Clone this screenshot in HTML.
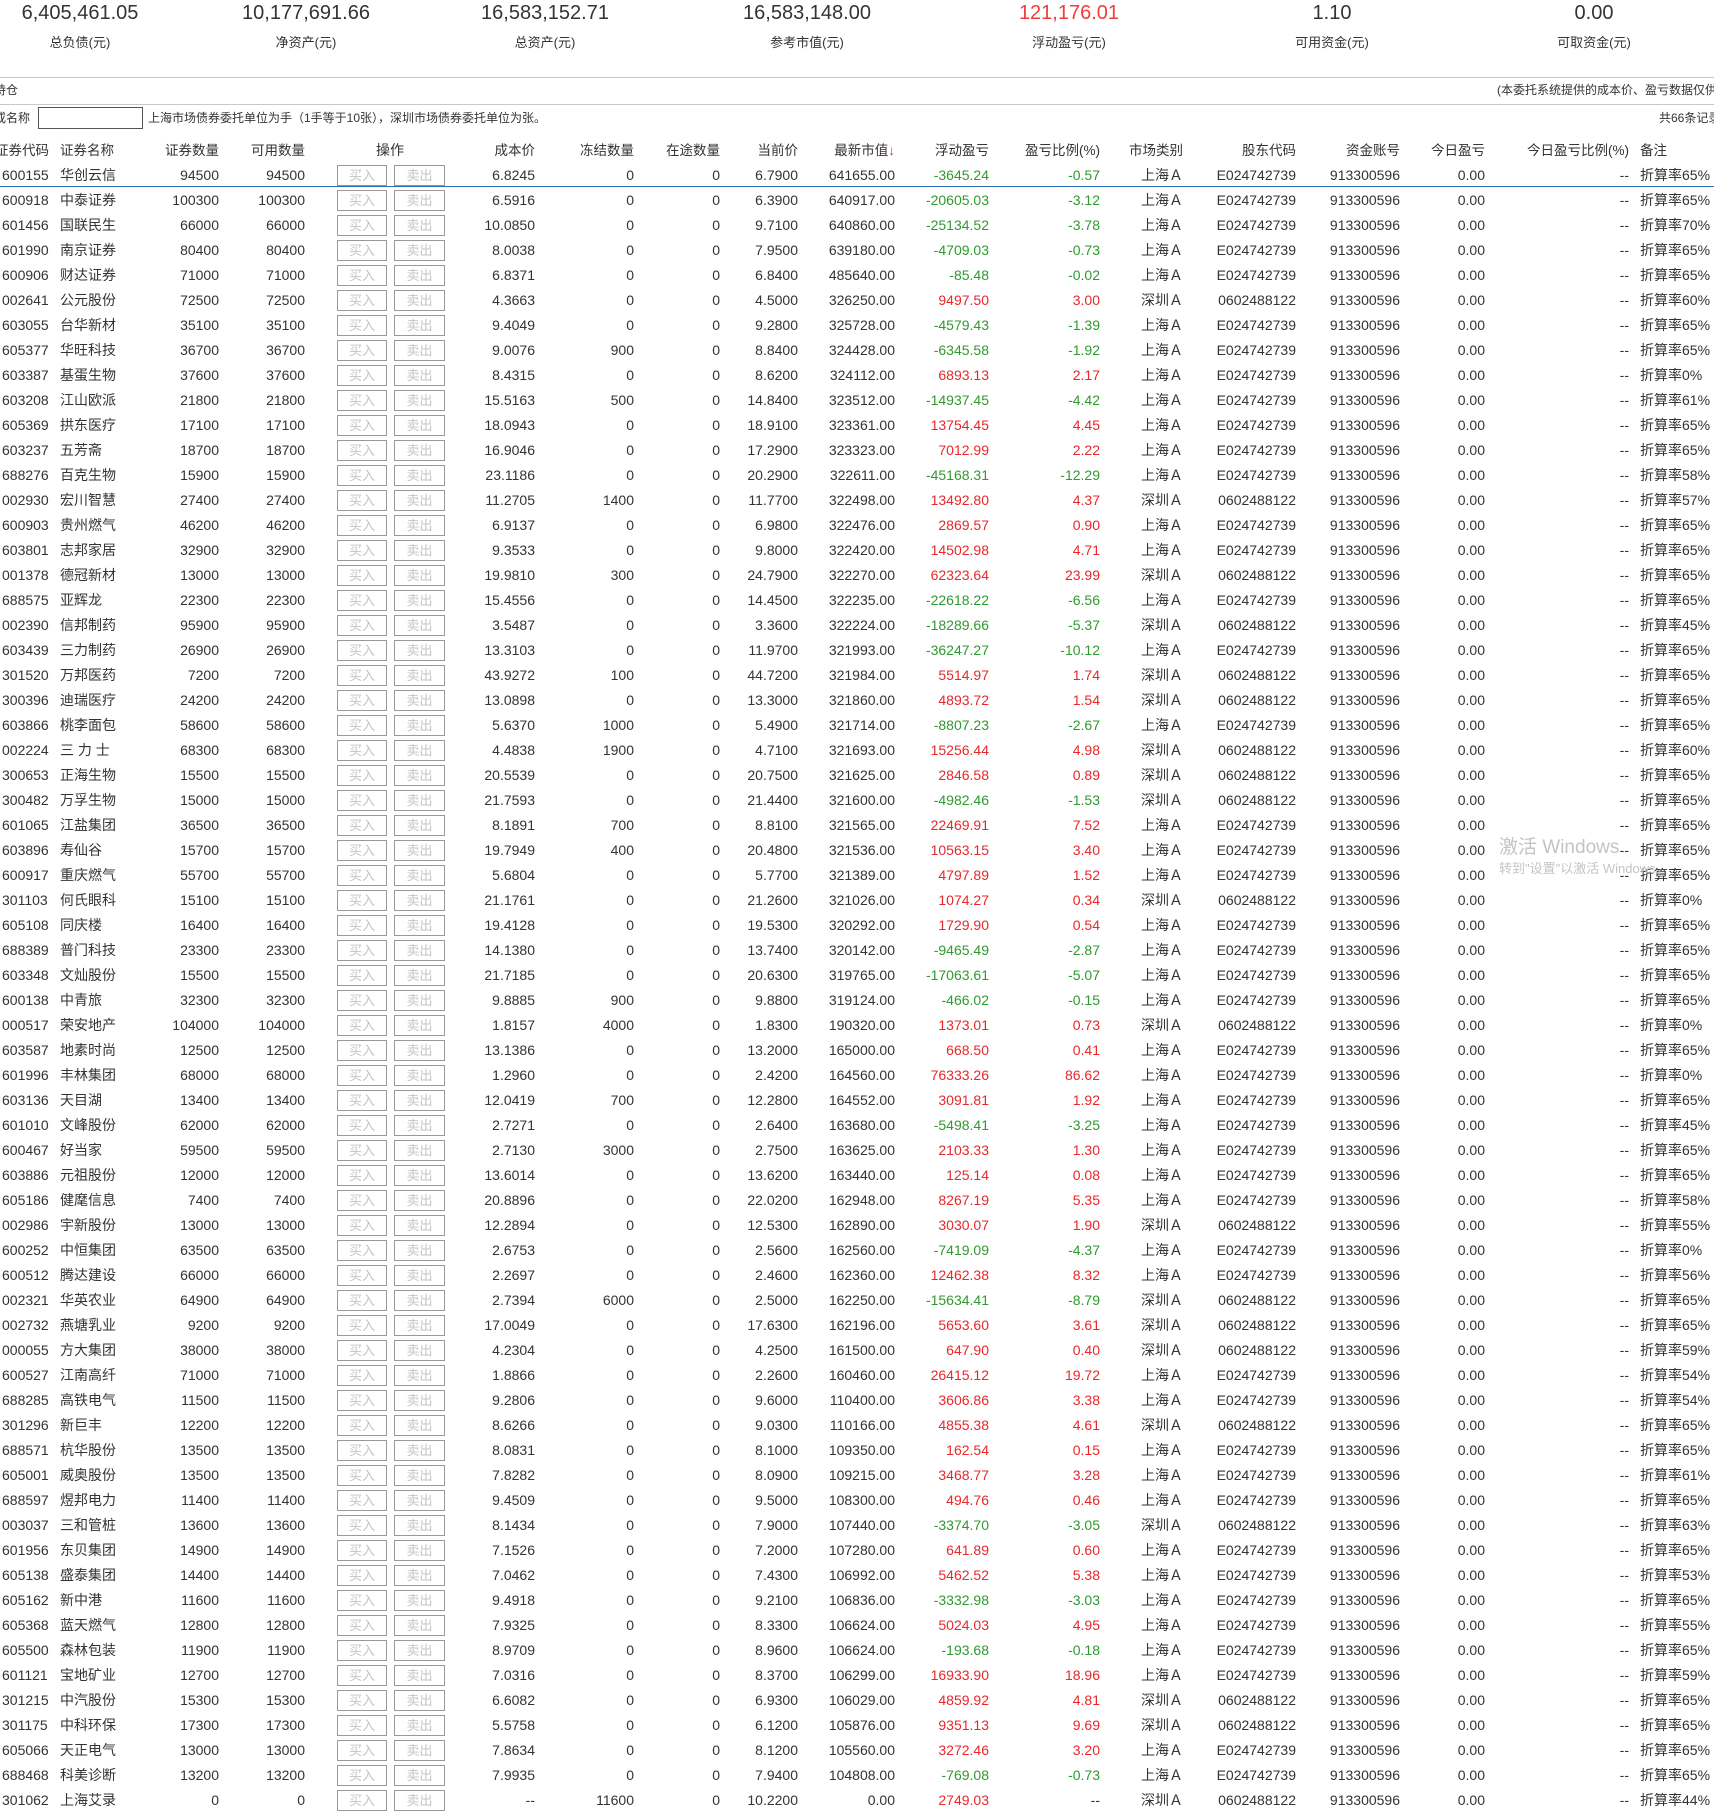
<!DOCTYPE html>
<html><head><meta charset="utf-8">
<style>
*{margin:0;padding:0;box-sizing:border-box}
body{width:1714px;height:1811px;overflow:hidden;background:#fff;font-family:"Liberation Sans","Noto Sans CJK SC",sans-serif;color:#333;font-size:14px;position:relative}
.sum{position:absolute;top:0;width:240px;text-align:center}
.sum .v{font-size:20px;line-height:26px;margin-top:0}
.sum .l{font-size:13px;line-height:20px;margin-top:7px}
.hl{position:absolute;left:0;width:1714px;height:1px;background:#c8c8c8}
.t{position:absolute;white-space:nowrap;font-size:12px;line-height:16px}
.inp{position:absolute;left:38px;top:107px;width:105px;height:22px;border:1px solid #555;background:#fff}
.tb{position:absolute;left:0;top:1px;width:1714px;height:1811px}
.r{position:absolute;left:0;width:1714px;height:25px;line-height:25px;font-size:14px}
.r>*{position:absolute;white-space:nowrap;font-style:normal;font-weight:normal}
.r>:nth-child(1){left:2px}
.r>:nth-child(2){left:60px}
.r>:nth-child(3){right:1495px}
.r>:nth-child(4){right:1409px}
.r>:nth-child(5),.r>:nth-child(6){top:2px;height:21px;width:50px;border:1px solid #999;line-height:19px;text-align:center;color:#c4c4c4;font-size:13px}
.r>:nth-child(5){left:337px}
.r>:nth-child(6){left:394px;width:51px}
.r>:nth-child(7){right:1179px}
.r>:nth-child(8){right:1080px}
.r>:nth-child(9){right:994px}
.r>:nth-child(10){right:916px}
.r>:nth-child(11){right:819px}
.r>:nth-child(12){right:725px}
.r>:nth-child(13){right:614px}
.r>:nth-child(14){right:531px}
.r>:nth-child(15){right:418px}
.r>:nth-child(16){right:314px}
.r>:nth-child(17){right:229px}
.r>:nth-child(18){right:85px}
.r>:nth-child(19){left:1640px}
.g>:nth-child(12),.g>:nth-child(13){color:#2f9a2f}
.d>:nth-child(12),.d>:nth-child(13){color:#e8282b}
.h>:nth-child(5){left:376px;border:none;color:#333;font-size:14px;top:0;line-height:25px;width:auto}
.h>:nth-child(6){display:none}
.blue{position:absolute;left:0;top:186px;width:1714px;height:1px;background:#2a6cb0}
.wm{position:absolute;left:1499px;color:#bbb;white-space:nowrap}
</style></head><body>
<div class="sum" style="left:-40px"><div class="v">6,405,461.05</div><div class="l">总负债(元)</div></div>
<div class="sum" style="left:186px"><div class="v">10,177,691.66</div><div class="l">净资产(元)</div></div>
<div class="sum" style="left:425px"><div class="v">16,583,152.71</div><div class="l">总资产(元)</div></div>
<div class="sum" style="left:687px"><div class="v">16,583,148.00</div><div class="l">参考市值(元)</div></div>
<div class="sum" style="left:949px"><div class="v" style="color:#f03c3c">121,176.01</div><div class="l">浮动盈亏(元)</div></div>
<div class="sum" style="left:1212px"><div class="v">1.10</div><div class="l">可用资金(元)</div></div>
<div class="sum" style="left:1474px"><div class="v">0.00</div><div class="l">可取资金(元)</div></div>
<div class="hl" style="top:77px"></div>
<div class="t" style="left:-6px;top:82px">持仓</div>
<div class="t" style="left:1497px;top:82px">(本委托系统提供的成本价、盈亏数据仅供参考)</div>
<div class="hl" style="top:104px"></div>
<div class="t" style="left:-6px;top:110px">或名称</div>
<div class="inp"></div>
<div class="t" style="left:148px;top:110px">上海市场债券委托单位为手（1手等于10张），深圳市场债券委托单位为张。</div>
<div class="t" style="left:1659px;top:110px">共66条记录</div>
<div class="blue"></div>
<div class="tb">
<div class="r h" style="top:137px;font-size:13.5px"><i style="left:-5px">证券代码</i><i>证券名称</i><i>证券数量</i><i>可用数量</i><i>操作</i><i></i><i>成本价</i><i>冻结数量</i><i>在途数量</i><i>当前价</i><i>最新市值<span style="color:#e8282b">↓</span></i><i>浮动盈亏</i><i>盈亏比例(%)</i><i>市场类别</i><i>股东代码</i><i>资金账号</i><i>今日盈亏</i><i>今日盈亏比例(%)</i><i>备注</i></div>
<div class="r g" style="top:162px"><i>600155</i><i>华创云信</i><i>94500</i><i>94500</i><b>买入</b><b>卖出</b><i>6.8245</i><i>0</i><i>0</i><i>6.7900</i><i>641655.00</i><i>-3645.24</i><i>-0.57</i><i>上海Ａ</i><i>E024742739</i><i>913300596</i><i>0.00</i><i>--</i><i>折算率65%</i></div>
<div class="r g" style="top:187px"><i>600918</i><i>中泰证券</i><i>100300</i><i>100300</i><b>买入</b><b>卖出</b><i>6.5916</i><i>0</i><i>0</i><i>6.3900</i><i>640917.00</i><i>-20605.03</i><i>-3.12</i><i>上海Ａ</i><i>E024742739</i><i>913300596</i><i>0.00</i><i>--</i><i>折算率65%</i></div>
<div class="r g" style="top:212px"><i>601456</i><i>国联民生</i><i>66000</i><i>66000</i><b>买入</b><b>卖出</b><i>10.0850</i><i>0</i><i>0</i><i>9.7100</i><i>640860.00</i><i>-25134.52</i><i>-3.78</i><i>上海Ａ</i><i>E024742739</i><i>913300596</i><i>0.00</i><i>--</i><i>折算率70%</i></div>
<div class="r g" style="top:237px"><i>601990</i><i>南京证券</i><i>80400</i><i>80400</i><b>买入</b><b>卖出</b><i>8.0038</i><i>0</i><i>0</i><i>7.9500</i><i>639180.00</i><i>-4709.03</i><i>-0.73</i><i>上海Ａ</i><i>E024742739</i><i>913300596</i><i>0.00</i><i>--</i><i>折算率65%</i></div>
<div class="r g" style="top:262px"><i>600906</i><i>财达证券</i><i>71000</i><i>71000</i><b>买入</b><b>卖出</b><i>6.8371</i><i>0</i><i>0</i><i>6.8400</i><i>485640.00</i><i>-85.48</i><i>-0.02</i><i>上海Ａ</i><i>E024742739</i><i>913300596</i><i>0.00</i><i>--</i><i>折算率65%</i></div>
<div class="r d" style="top:287px"><i>002641</i><i>公元股份</i><i>72500</i><i>72500</i><b>买入</b><b>卖出</b><i>4.3663</i><i>0</i><i>0</i><i>4.5000</i><i>326250.00</i><i>9497.50</i><i>3.00</i><i>深圳Ａ</i><i>0602488122</i><i>913300596</i><i>0.00</i><i>--</i><i>折算率60%</i></div>
<div class="r g" style="top:312px"><i>603055</i><i>台华新材</i><i>35100</i><i>35100</i><b>买入</b><b>卖出</b><i>9.4049</i><i>0</i><i>0</i><i>9.2800</i><i>325728.00</i><i>-4579.43</i><i>-1.39</i><i>上海Ａ</i><i>E024742739</i><i>913300596</i><i>0.00</i><i>--</i><i>折算率65%</i></div>
<div class="r g" style="top:337px"><i>605377</i><i>华旺科技</i><i>36700</i><i>36700</i><b>买入</b><b>卖出</b><i>9.0076</i><i>900</i><i>0</i><i>8.8400</i><i>324428.00</i><i>-6345.58</i><i>-1.92</i><i>上海Ａ</i><i>E024742739</i><i>913300596</i><i>0.00</i><i>--</i><i>折算率65%</i></div>
<div class="r d" style="top:362px"><i>603387</i><i>基蛋生物</i><i>37600</i><i>37600</i><b>买入</b><b>卖出</b><i>8.4315</i><i>0</i><i>0</i><i>8.6200</i><i>324112.00</i><i>6893.13</i><i>2.17</i><i>上海Ａ</i><i>E024742739</i><i>913300596</i><i>0.00</i><i>--</i><i>折算率0%</i></div>
<div class="r g" style="top:387px"><i>603208</i><i>江山欧派</i><i>21800</i><i>21800</i><b>买入</b><b>卖出</b><i>15.5163</i><i>500</i><i>0</i><i>14.8400</i><i>323512.00</i><i>-14937.45</i><i>-4.42</i><i>上海Ａ</i><i>E024742739</i><i>913300596</i><i>0.00</i><i>--</i><i>折算率61%</i></div>
<div class="r d" style="top:412px"><i>605369</i><i>拱东医疗</i><i>17100</i><i>17100</i><b>买入</b><b>卖出</b><i>18.0943</i><i>0</i><i>0</i><i>18.9100</i><i>323361.00</i><i>13754.45</i><i>4.45</i><i>上海Ａ</i><i>E024742739</i><i>913300596</i><i>0.00</i><i>--</i><i>折算率65%</i></div>
<div class="r d" style="top:437px"><i>603237</i><i>五芳斋</i><i>18700</i><i>18700</i><b>买入</b><b>卖出</b><i>16.9046</i><i>0</i><i>0</i><i>17.2900</i><i>323323.00</i><i>7012.99</i><i>2.22</i><i>上海Ａ</i><i>E024742739</i><i>913300596</i><i>0.00</i><i>--</i><i>折算率65%</i></div>
<div class="r g" style="top:462px"><i>688276</i><i>百克生物</i><i>15900</i><i>15900</i><b>买入</b><b>卖出</b><i>23.1186</i><i>0</i><i>0</i><i>20.2900</i><i>322611.00</i><i>-45168.31</i><i>-12.29</i><i>上海Ａ</i><i>E024742739</i><i>913300596</i><i>0.00</i><i>--</i><i>折算率58%</i></div>
<div class="r d" style="top:487px"><i>002930</i><i>宏川智慧</i><i>27400</i><i>27400</i><b>买入</b><b>卖出</b><i>11.2705</i><i>1400</i><i>0</i><i>11.7700</i><i>322498.00</i><i>13492.80</i><i>4.37</i><i>深圳Ａ</i><i>0602488122</i><i>913300596</i><i>0.00</i><i>--</i><i>折算率57%</i></div>
<div class="r d" style="top:512px"><i>600903</i><i>贵州燃气</i><i>46200</i><i>46200</i><b>买入</b><b>卖出</b><i>6.9137</i><i>0</i><i>0</i><i>6.9800</i><i>322476.00</i><i>2869.57</i><i>0.90</i><i>上海Ａ</i><i>E024742739</i><i>913300596</i><i>0.00</i><i>--</i><i>折算率65%</i></div>
<div class="r d" style="top:537px"><i>603801</i><i>志邦家居</i><i>32900</i><i>32900</i><b>买入</b><b>卖出</b><i>9.3533</i><i>0</i><i>0</i><i>9.8000</i><i>322420.00</i><i>14502.98</i><i>4.71</i><i>上海Ａ</i><i>E024742739</i><i>913300596</i><i>0.00</i><i>--</i><i>折算率65%</i></div>
<div class="r d" style="top:562px"><i>001378</i><i>德冠新材</i><i>13000</i><i>13000</i><b>买入</b><b>卖出</b><i>19.9810</i><i>300</i><i>0</i><i>24.7900</i><i>322270.00</i><i>62323.64</i><i>23.99</i><i>深圳Ａ</i><i>0602488122</i><i>913300596</i><i>0.00</i><i>--</i><i>折算率65%</i></div>
<div class="r g" style="top:587px"><i>688575</i><i>亚辉龙</i><i>22300</i><i>22300</i><b>买入</b><b>卖出</b><i>15.4556</i><i>0</i><i>0</i><i>14.4500</i><i>322235.00</i><i>-22618.22</i><i>-6.56</i><i>上海Ａ</i><i>E024742739</i><i>913300596</i><i>0.00</i><i>--</i><i>折算率65%</i></div>
<div class="r g" style="top:612px"><i>002390</i><i>信邦制药</i><i>95900</i><i>95900</i><b>买入</b><b>卖出</b><i>3.5487</i><i>0</i><i>0</i><i>3.3600</i><i>322224.00</i><i>-18289.66</i><i>-5.37</i><i>深圳Ａ</i><i>0602488122</i><i>913300596</i><i>0.00</i><i>--</i><i>折算率45%</i></div>
<div class="r g" style="top:637px"><i>603439</i><i>三力制药</i><i>26900</i><i>26900</i><b>买入</b><b>卖出</b><i>13.3103</i><i>0</i><i>0</i><i>11.9700</i><i>321993.00</i><i>-36247.27</i><i>-10.12</i><i>上海Ａ</i><i>E024742739</i><i>913300596</i><i>0.00</i><i>--</i><i>折算率65%</i></div>
<div class="r d" style="top:662px"><i>301520</i><i>万邦医药</i><i>7200</i><i>7200</i><b>买入</b><b>卖出</b><i>43.9272</i><i>100</i><i>0</i><i>44.7200</i><i>321984.00</i><i>5514.97</i><i>1.74</i><i>深圳Ａ</i><i>0602488122</i><i>913300596</i><i>0.00</i><i>--</i><i>折算率65%</i></div>
<div class="r d" style="top:687px"><i>300396</i><i>迪瑞医疗</i><i>24200</i><i>24200</i><b>买入</b><b>卖出</b><i>13.0898</i><i>0</i><i>0</i><i>13.3000</i><i>321860.00</i><i>4893.72</i><i>1.54</i><i>深圳Ａ</i><i>0602488122</i><i>913300596</i><i>0.00</i><i>--</i><i>折算率65%</i></div>
<div class="r g" style="top:712px"><i>603866</i><i>桃李面包</i><i>58600</i><i>58600</i><b>买入</b><b>卖出</b><i>5.6370</i><i>1000</i><i>0</i><i>5.4900</i><i>321714.00</i><i>-8807.23</i><i>-2.67</i><i>上海Ａ</i><i>E024742739</i><i>913300596</i><i>0.00</i><i>--</i><i>折算率65%</i></div>
<div class="r d" style="top:737px"><i>002224</i><i>三 力 士</i><i>68300</i><i>68300</i><b>买入</b><b>卖出</b><i>4.4838</i><i>1900</i><i>0</i><i>4.7100</i><i>321693.00</i><i>15256.44</i><i>4.98</i><i>深圳Ａ</i><i>0602488122</i><i>913300596</i><i>0.00</i><i>--</i><i>折算率60%</i></div>
<div class="r d" style="top:762px"><i>300653</i><i>正海生物</i><i>15500</i><i>15500</i><b>买入</b><b>卖出</b><i>20.5539</i><i>0</i><i>0</i><i>20.7500</i><i>321625.00</i><i>2846.58</i><i>0.89</i><i>深圳Ａ</i><i>0602488122</i><i>913300596</i><i>0.00</i><i>--</i><i>折算率65%</i></div>
<div class="r g" style="top:787px"><i>300482</i><i>万孚生物</i><i>15000</i><i>15000</i><b>买入</b><b>卖出</b><i>21.7593</i><i>0</i><i>0</i><i>21.4400</i><i>321600.00</i><i>-4982.46</i><i>-1.53</i><i>深圳Ａ</i><i>0602488122</i><i>913300596</i><i>0.00</i><i>--</i><i>折算率65%</i></div>
<div class="r d" style="top:812px"><i>601065</i><i>江盐集团</i><i>36500</i><i>36500</i><b>买入</b><b>卖出</b><i>8.1891</i><i>700</i><i>0</i><i>8.8100</i><i>321565.00</i><i>22469.91</i><i>7.52</i><i>上海Ａ</i><i>E024742739</i><i>913300596</i><i>0.00</i><i>--</i><i>折算率65%</i></div>
<div class="r d" style="top:837px"><i>603896</i><i>寿仙谷</i><i>15700</i><i>15700</i><b>买入</b><b>卖出</b><i>19.7949</i><i>400</i><i>0</i><i>20.4800</i><i>321536.00</i><i>10563.15</i><i>3.40</i><i>上海Ａ</i><i>E024742739</i><i>913300596</i><i>0.00</i><i>--</i><i>折算率65%</i></div>
<div class="r d" style="top:862px"><i>600917</i><i>重庆燃气</i><i>55700</i><i>55700</i><b>买入</b><b>卖出</b><i>5.6804</i><i>0</i><i>0</i><i>5.7700</i><i>321389.00</i><i>4797.89</i><i>1.52</i><i>上海Ａ</i><i>E024742739</i><i>913300596</i><i>0.00</i><i>--</i><i>折算率65%</i></div>
<div class="r d" style="top:887px"><i>301103</i><i>何氏眼科</i><i>15100</i><i>15100</i><b>买入</b><b>卖出</b><i>21.1761</i><i>0</i><i>0</i><i>21.2600</i><i>321026.00</i><i>1074.27</i><i>0.34</i><i>深圳Ａ</i><i>0602488122</i><i>913300596</i><i>0.00</i><i>--</i><i>折算率0%</i></div>
<div class="r d" style="top:912px"><i>605108</i><i>同庆楼</i><i>16400</i><i>16400</i><b>买入</b><b>卖出</b><i>19.4128</i><i>0</i><i>0</i><i>19.5300</i><i>320292.00</i><i>1729.90</i><i>0.54</i><i>上海Ａ</i><i>E024742739</i><i>913300596</i><i>0.00</i><i>--</i><i>折算率65%</i></div>
<div class="r g" style="top:937px"><i>688389</i><i>普门科技</i><i>23300</i><i>23300</i><b>买入</b><b>卖出</b><i>14.1380</i><i>0</i><i>0</i><i>13.7400</i><i>320142.00</i><i>-9465.49</i><i>-2.87</i><i>上海Ａ</i><i>E024742739</i><i>913300596</i><i>0.00</i><i>--</i><i>折算率65%</i></div>
<div class="r g" style="top:962px"><i>603348</i><i>文灿股份</i><i>15500</i><i>15500</i><b>买入</b><b>卖出</b><i>21.7185</i><i>0</i><i>0</i><i>20.6300</i><i>319765.00</i><i>-17063.61</i><i>-5.07</i><i>上海Ａ</i><i>E024742739</i><i>913300596</i><i>0.00</i><i>--</i><i>折算率65%</i></div>
<div class="r g" style="top:987px"><i>600138</i><i>中青旅</i><i>32300</i><i>32300</i><b>买入</b><b>卖出</b><i>9.8885</i><i>900</i><i>0</i><i>9.8800</i><i>319124.00</i><i>-466.02</i><i>-0.15</i><i>上海Ａ</i><i>E024742739</i><i>913300596</i><i>0.00</i><i>--</i><i>折算率65%</i></div>
<div class="r d" style="top:1012px"><i>000517</i><i>荣安地产</i><i>104000</i><i>104000</i><b>买入</b><b>卖出</b><i>1.8157</i><i>4000</i><i>0</i><i>1.8300</i><i>190320.00</i><i>1373.01</i><i>0.73</i><i>深圳Ａ</i><i>0602488122</i><i>913300596</i><i>0.00</i><i>--</i><i>折算率0%</i></div>
<div class="r d" style="top:1037px"><i>603587</i><i>地素时尚</i><i>12500</i><i>12500</i><b>买入</b><b>卖出</b><i>13.1386</i><i>0</i><i>0</i><i>13.2000</i><i>165000.00</i><i>668.50</i><i>0.41</i><i>上海Ａ</i><i>E024742739</i><i>913300596</i><i>0.00</i><i>--</i><i>折算率65%</i></div>
<div class="r d" style="top:1062px"><i>601996</i><i>丰林集团</i><i>68000</i><i>68000</i><b>买入</b><b>卖出</b><i>1.2960</i><i>0</i><i>0</i><i>2.4200</i><i>164560.00</i><i>76333.26</i><i>86.62</i><i>上海Ａ</i><i>E024742739</i><i>913300596</i><i>0.00</i><i>--</i><i>折算率0%</i></div>
<div class="r d" style="top:1087px"><i>603136</i><i>天目湖</i><i>13400</i><i>13400</i><b>买入</b><b>卖出</b><i>12.0419</i><i>700</i><i>0</i><i>12.2800</i><i>164552.00</i><i>3091.81</i><i>1.92</i><i>上海Ａ</i><i>E024742739</i><i>913300596</i><i>0.00</i><i>--</i><i>折算率65%</i></div>
<div class="r g" style="top:1112px"><i>601010</i><i>文峰股份</i><i>62000</i><i>62000</i><b>买入</b><b>卖出</b><i>2.7271</i><i>0</i><i>0</i><i>2.6400</i><i>163680.00</i><i>-5498.41</i><i>-3.25</i><i>上海Ａ</i><i>E024742739</i><i>913300596</i><i>0.00</i><i>--</i><i>折算率45%</i></div>
<div class="r d" style="top:1137px"><i>600467</i><i>好当家</i><i>59500</i><i>59500</i><b>买入</b><b>卖出</b><i>2.7130</i><i>3000</i><i>0</i><i>2.7500</i><i>163625.00</i><i>2103.33</i><i>1.30</i><i>上海Ａ</i><i>E024742739</i><i>913300596</i><i>0.00</i><i>--</i><i>折算率65%</i></div>
<div class="r d" style="top:1162px"><i>603886</i><i>元祖股份</i><i>12000</i><i>12000</i><b>买入</b><b>卖出</b><i>13.6014</i><i>0</i><i>0</i><i>13.6200</i><i>163440.00</i><i>125.14</i><i>0.08</i><i>上海Ａ</i><i>E024742739</i><i>913300596</i><i>0.00</i><i>--</i><i>折算率65%</i></div>
<div class="r d" style="top:1187px"><i>605186</i><i>健麾信息</i><i>7400</i><i>7400</i><b>买入</b><b>卖出</b><i>20.8896</i><i>0</i><i>0</i><i>22.0200</i><i>162948.00</i><i>8267.19</i><i>5.35</i><i>上海Ａ</i><i>E024742739</i><i>913300596</i><i>0.00</i><i>--</i><i>折算率58%</i></div>
<div class="r d" style="top:1212px"><i>002986</i><i>宇新股份</i><i>13000</i><i>13000</i><b>买入</b><b>卖出</b><i>12.2894</i><i>0</i><i>0</i><i>12.5300</i><i>162890.00</i><i>3030.07</i><i>1.90</i><i>深圳Ａ</i><i>0602488122</i><i>913300596</i><i>0.00</i><i>--</i><i>折算率55%</i></div>
<div class="r g" style="top:1237px"><i>600252</i><i>中恒集团</i><i>63500</i><i>63500</i><b>买入</b><b>卖出</b><i>2.6753</i><i>0</i><i>0</i><i>2.5600</i><i>162560.00</i><i>-7419.09</i><i>-4.37</i><i>上海Ａ</i><i>E024742739</i><i>913300596</i><i>0.00</i><i>--</i><i>折算率0%</i></div>
<div class="r d" style="top:1262px"><i>600512</i><i>腾达建设</i><i>66000</i><i>66000</i><b>买入</b><b>卖出</b><i>2.2697</i><i>0</i><i>0</i><i>2.4600</i><i>162360.00</i><i>12462.38</i><i>8.32</i><i>上海Ａ</i><i>E024742739</i><i>913300596</i><i>0.00</i><i>--</i><i>折算率56%</i></div>
<div class="r g" style="top:1287px"><i>002321</i><i>华英农业</i><i>64900</i><i>64900</i><b>买入</b><b>卖出</b><i>2.7394</i><i>6000</i><i>0</i><i>2.5000</i><i>162250.00</i><i>-15634.41</i><i>-8.79</i><i>深圳Ａ</i><i>0602488122</i><i>913300596</i><i>0.00</i><i>--</i><i>折算率65%</i></div>
<div class="r d" style="top:1312px"><i>002732</i><i>燕塘乳业</i><i>9200</i><i>9200</i><b>买入</b><b>卖出</b><i>17.0049</i><i>0</i><i>0</i><i>17.6300</i><i>162196.00</i><i>5653.60</i><i>3.61</i><i>深圳Ａ</i><i>0602488122</i><i>913300596</i><i>0.00</i><i>--</i><i>折算率65%</i></div>
<div class="r d" style="top:1337px"><i>000055</i><i>方大集团</i><i>38000</i><i>38000</i><b>买入</b><b>卖出</b><i>4.2304</i><i>0</i><i>0</i><i>4.2500</i><i>161500.00</i><i>647.90</i><i>0.40</i><i>深圳Ａ</i><i>0602488122</i><i>913300596</i><i>0.00</i><i>--</i><i>折算率59%</i></div>
<div class="r d" style="top:1362px"><i>600527</i><i>江南高纤</i><i>71000</i><i>71000</i><b>买入</b><b>卖出</b><i>1.8866</i><i>0</i><i>0</i><i>2.2600</i><i>160460.00</i><i>26415.12</i><i>19.72</i><i>上海Ａ</i><i>E024742739</i><i>913300596</i><i>0.00</i><i>--</i><i>折算率54%</i></div>
<div class="r d" style="top:1387px"><i>688285</i><i>高铁电气</i><i>11500</i><i>11500</i><b>买入</b><b>卖出</b><i>9.2806</i><i>0</i><i>0</i><i>9.6000</i><i>110400.00</i><i>3606.86</i><i>3.38</i><i>上海Ａ</i><i>E024742739</i><i>913300596</i><i>0.00</i><i>--</i><i>折算率54%</i></div>
<div class="r d" style="top:1412px"><i>301296</i><i>新巨丰</i><i>12200</i><i>12200</i><b>买入</b><b>卖出</b><i>8.6266</i><i>0</i><i>0</i><i>9.0300</i><i>110166.00</i><i>4855.38</i><i>4.61</i><i>深圳Ａ</i><i>0602488122</i><i>913300596</i><i>0.00</i><i>--</i><i>折算率65%</i></div>
<div class="r d" style="top:1437px"><i>688571</i><i>杭华股份</i><i>13500</i><i>13500</i><b>买入</b><b>卖出</b><i>8.0831</i><i>0</i><i>0</i><i>8.1000</i><i>109350.00</i><i>162.54</i><i>0.15</i><i>上海Ａ</i><i>E024742739</i><i>913300596</i><i>0.00</i><i>--</i><i>折算率65%</i></div>
<div class="r d" style="top:1462px"><i>605001</i><i>威奥股份</i><i>13500</i><i>13500</i><b>买入</b><b>卖出</b><i>7.8282</i><i>0</i><i>0</i><i>8.0900</i><i>109215.00</i><i>3468.77</i><i>3.28</i><i>上海Ａ</i><i>E024742739</i><i>913300596</i><i>0.00</i><i>--</i><i>折算率61%</i></div>
<div class="r d" style="top:1487px"><i>688597</i><i>煜邦电力</i><i>11400</i><i>11400</i><b>买入</b><b>卖出</b><i>9.4509</i><i>0</i><i>0</i><i>9.5000</i><i>108300.00</i><i>494.76</i><i>0.46</i><i>上海Ａ</i><i>E024742739</i><i>913300596</i><i>0.00</i><i>--</i><i>折算率65%</i></div>
<div class="r g" style="top:1512px"><i>003037</i><i>三和管桩</i><i>13600</i><i>13600</i><b>买入</b><b>卖出</b><i>8.1434</i><i>0</i><i>0</i><i>7.9000</i><i>107440.00</i><i>-3374.70</i><i>-3.05</i><i>深圳Ａ</i><i>0602488122</i><i>913300596</i><i>0.00</i><i>--</i><i>折算率63%</i></div>
<div class="r d" style="top:1537px"><i>601956</i><i>东贝集团</i><i>14900</i><i>14900</i><b>买入</b><b>卖出</b><i>7.1526</i><i>0</i><i>0</i><i>7.2000</i><i>107280.00</i><i>641.89</i><i>0.60</i><i>上海Ａ</i><i>E024742739</i><i>913300596</i><i>0.00</i><i>--</i><i>折算率65%</i></div>
<div class="r d" style="top:1562px"><i>605138</i><i>盛泰集团</i><i>14400</i><i>14400</i><b>买入</b><b>卖出</b><i>7.0462</i><i>0</i><i>0</i><i>7.4300</i><i>106992.00</i><i>5462.52</i><i>5.38</i><i>上海Ａ</i><i>E024742739</i><i>913300596</i><i>0.00</i><i>--</i><i>折算率53%</i></div>
<div class="r g" style="top:1587px"><i>605162</i><i>新中港</i><i>11600</i><i>11600</i><b>买入</b><b>卖出</b><i>9.4918</i><i>0</i><i>0</i><i>9.2100</i><i>106836.00</i><i>-3332.98</i><i>-3.03</i><i>上海Ａ</i><i>E024742739</i><i>913300596</i><i>0.00</i><i>--</i><i>折算率65%</i></div>
<div class="r d" style="top:1612px"><i>605368</i><i>蓝天燃气</i><i>12800</i><i>12800</i><b>买入</b><b>卖出</b><i>7.9325</i><i>0</i><i>0</i><i>8.3300</i><i>106624.00</i><i>5024.03</i><i>4.95</i><i>上海Ａ</i><i>E024742739</i><i>913300596</i><i>0.00</i><i>--</i><i>折算率55%</i></div>
<div class="r g" style="top:1637px"><i>605500</i><i>森林包装</i><i>11900</i><i>11900</i><b>买入</b><b>卖出</b><i>8.9709</i><i>0</i><i>0</i><i>8.9600</i><i>106624.00</i><i>-193.68</i><i>-0.18</i><i>上海Ａ</i><i>E024742739</i><i>913300596</i><i>0.00</i><i>--</i><i>折算率65%</i></div>
<div class="r d" style="top:1662px"><i>601121</i><i>宝地矿业</i><i>12700</i><i>12700</i><b>买入</b><b>卖出</b><i>7.0316</i><i>0</i><i>0</i><i>8.3700</i><i>106299.00</i><i>16933.90</i><i>18.96</i><i>上海Ａ</i><i>E024742739</i><i>913300596</i><i>0.00</i><i>--</i><i>折算率59%</i></div>
<div class="r d" style="top:1687px"><i>301215</i><i>中汽股份</i><i>15300</i><i>15300</i><b>买入</b><b>卖出</b><i>6.6082</i><i>0</i><i>0</i><i>6.9300</i><i>106029.00</i><i>4859.92</i><i>4.81</i><i>深圳Ａ</i><i>0602488122</i><i>913300596</i><i>0.00</i><i>--</i><i>折算率65%</i></div>
<div class="r d" style="top:1712px"><i>301175</i><i>中科环保</i><i>17300</i><i>17300</i><b>买入</b><b>卖出</b><i>5.5758</i><i>0</i><i>0</i><i>6.1200</i><i>105876.00</i><i>9351.13</i><i>9.69</i><i>深圳Ａ</i><i>0602488122</i><i>913300596</i><i>0.00</i><i>--</i><i>折算率65%</i></div>
<div class="r d" style="top:1737px"><i>605066</i><i>天正电气</i><i>13000</i><i>13000</i><b>买入</b><b>卖出</b><i>7.8634</i><i>0</i><i>0</i><i>8.1200</i><i>105560.00</i><i>3272.46</i><i>3.20</i><i>上海Ａ</i><i>E024742739</i><i>913300596</i><i>0.00</i><i>--</i><i>折算率65%</i></div>
<div class="r g" style="top:1762px"><i>688468</i><i>科美诊断</i><i>13200</i><i>13200</i><b>买入</b><b>卖出</b><i>7.9935</i><i>0</i><i>0</i><i>7.9400</i><i>104808.00</i><i>-769.08</i><i>-0.73</i><i>上海Ａ</i><i>E024742739</i><i>913300596</i><i>0.00</i><i>--</i><i>折算率65%</i></div>
<div class="r d" style="top:1787px"><i>301062</i><i>上海艾录</i><i>0</i><i>0</i><b>买入</b><b>卖出</b><i>--</i><i>11600</i><i>0</i><i>10.2200</i><i>0.00</i><i>2749.03</i><i style="color:#333">--</i><i>深圳Ａ</i><i>0602488122</i><i>913300596</i><i>0.00</i><i>--</i><i>折算率44%</i></div>
</div>
<div class="wm" style="top:832px;font-size:19px;color:#c4c4c4">激活 Windows</div>
<div class="wm" style="top:858px;font-size:13px;color:#c4c4c4">转到"设置"以激活 Windows。</div>
</body></html>
